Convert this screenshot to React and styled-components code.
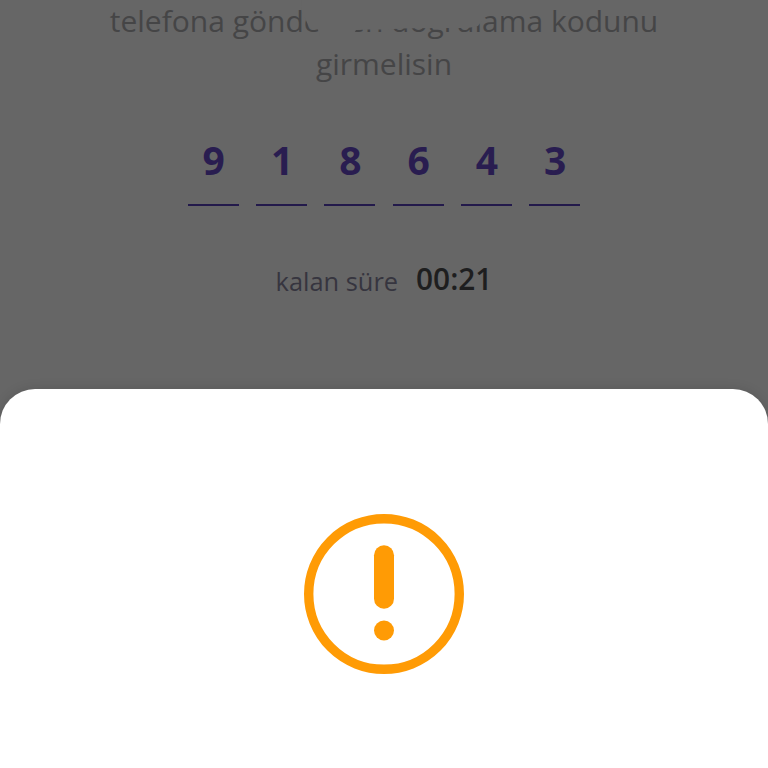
import styled, { createGlobalStyle } from 'styled-components';

const GlobalStyle = createGlobalStyle`
    body {
        margin: 0;
        background-color: #666666;
    }
`;

const Screen = styled.div`
    display: flex;
    flex-direction: column;
    height: 768px;
    overflow: hidden;
    background-color: #666666;
    font-family: 'Open Sans', sans-serif;
`;

const Page = styled.main`
    position: relative;
    display: flex;
    flex-direction: column;
    align-items: center;
    height: 389px;
    flex-shrink: 0;
`;

const Message = styled.p`
    margin: 0;
    font-size: 30px;
    line-height: 42.5px;
    text-align: center;
    color: #454546;
    white-space: nowrap;
`;

const Smudge = styled.svg`
    position: absolute;
    top: 0;
    left: 290px;
`;

const Code = styled.div`
    display: flex;
    flex-direction: row;
    gap: 17.3px;
    margin-top: 49px;
`;

const Digit = styled.div`
    box-sizing: border-box;
    width: 51px;
    height: 72.4px;
    padding-left: 1px;
    border-bottom: 2px solid #231a4b;
    font-size: 39px;
    font-weight: 700;
    line-height: 52px;
    text-align: center;
    color: #291d50;
`;

const Timer = styled.div`
    display: flex;
    flex-direction: row;
    align-items: flex-start;
    gap: 18px;
    margin-top: 51.6px;
`;

const TimerLabel = styled.span`
    margin-top: 6px;
    font-size: 25.4px;
    color: #36353f;
`;

const TimerValue = styled.span`
    font-size: 29.8px;
    font-weight: 600;
    color: #1e1e1f;
`;

const Sheet = styled.section`
    display: flex;
    justify-content: center;
    flex: 1;
    padding-top: 125px;
    border-radius: 35px 35px 0 0;
    background-color: #ffffff;
    box-shadow: 0 0 12px rgba(0, 0, 0, 0.13);
`;

const WarningIcon = () => (
    <svg width="160" height="160" viewBox="0 0 160 160">
        <circle cx="80" cy="80" r="75.3" fill="none" stroke="#ff9b05" strokeWidth="9.4" />
        <rect x="70" y="31.3" width="20" height="63.5" rx="10" fill="#ff9b05" />
        <circle cx="80" cy="116.5" r="10" fill="#ff9b05" />
    </svg>
);

const code = ['9', '1', '8', '6', '4', '3'];

export default function App() {
    return (
        <>
            <GlobalStyle />
            <Screen>
                <Page>
                    <Message>
                        telefona gönderilen doğrulama kodunu
                        <br />
                        girmelisin
                    </Message>
                    <Smudge width="210" height="36" viewBox="0 0 210 36">
                        <path d="M11 0 L12 13 L15 18 L18 25 L22 28.5 L28 29.5 L30 36 L62 36 L66 30 L80 29.5 L98 29.5 L110 28.5 L145 28 L178 28 L188 26 L191 22 L194 17 L200 13 L200 0 Z" fill="#666666" />
                    </Smudge>
                    <Code>
                        {code.map((digit, i) => (
                            <Digit key={i}>{digit}</Digit>
                        ))}
                    </Code>
                    <Timer>
                        <TimerLabel>kalan süre</TimerLabel>
                        <TimerValue>00:21</TimerValue>
                    </Timer>
                </Page>
                <Sheet>
                    <WarningIcon />
                </Sheet>
            </Screen>
        </>
    );
}
